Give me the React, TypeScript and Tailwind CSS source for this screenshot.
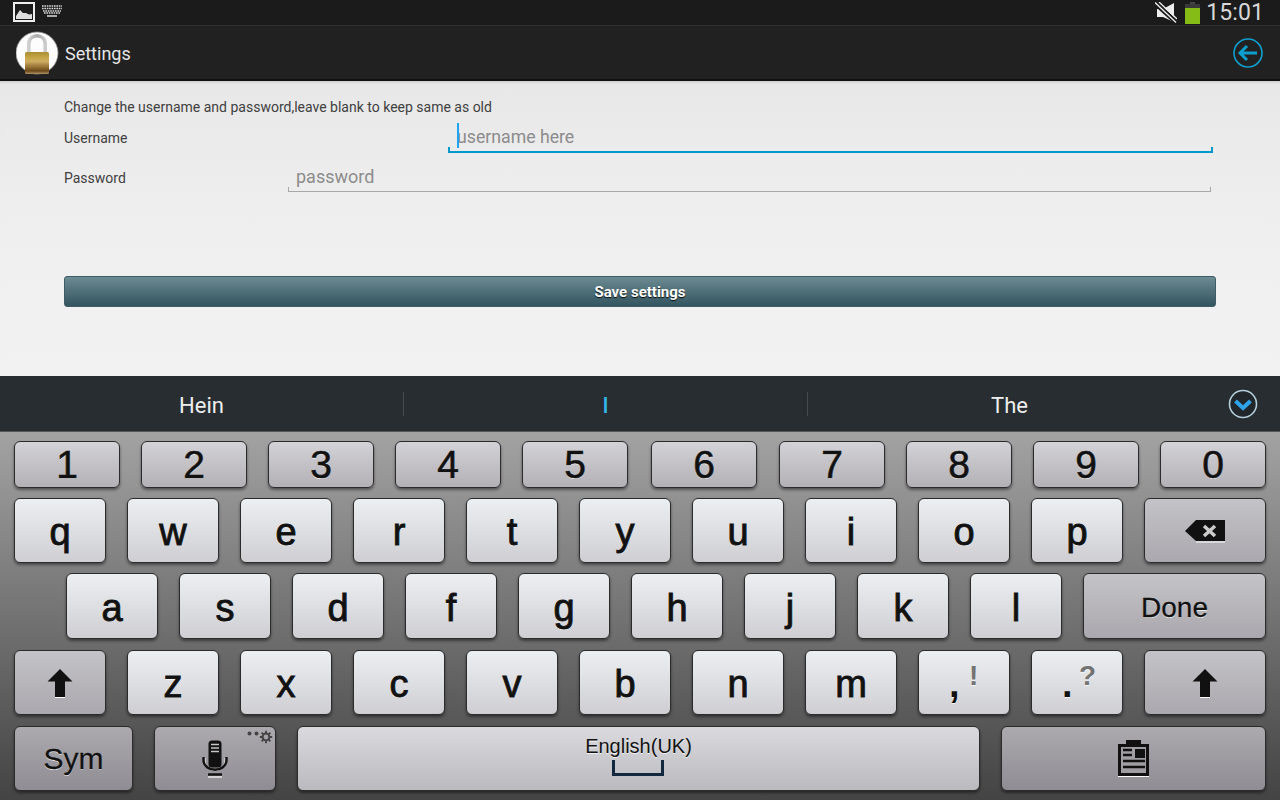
import React from "react";

const shadow = "[text-shadow:0_1px_0_rgba(255,255,255,0.75)]";
const letter = "pt-[4px] [-webkit-text-stroke:0.9px_#111]";
const digit = "pt-[2px] [-webkit-text-stroke:0.6px_#111]";

function Key({ w, variant = "light", label, className = "", children }: { w: string; variant?: "light" | "top" | "dark" | "darker" | "space"; label?: string; className?: string; children?: React.ReactNode }) {
  const bg = {
    top: "bg-gradient-to-b from-[#d3d2d6] to-[#b3b1b6]",
    dark: "bg-gradient-to-b from-[#c4c3c7] to-[#aaa8ae]",
    darker: "bg-gradient-to-b from-[#acaaaf] to-[#8f8d93]",
    space: "bg-gradient-to-b from-[#dadade] to-[#bbbbbf]",
    light: "bg-gradient-to-b from-[#eceff1] to-[#cfcfd3]",
  }[variant];
  return (
    <div
      className={`${w} ${bg} h-full shrink-0 rounded-[6px] border border-[#2b2b2b] shadow-[0_2px_3px_rgba(0,0,0,0.45)] flex items-center justify-center text-[#111] ${shadow} ${className}`}
    >
      {label}
      {children}
    </div>
  );
}

function Up() {
  return (
    <svg width="26" height="30" viewBox="0 0 26 30">
      <path d="M13 1 L25.5 13.5 L18 13.5 L18 29 L8 29 L8 13.5 L0.5 13.5 Z" fill="#111" />
      <path d="M8 29.5 H18" stroke="#fff" strokeWidth="1" />
    </svg>
  );
}

function Lock() {
  return (
    <svg width="44" height="44" viewBox="0 0 44 44">
      <defs>
        <linearGradient id="lockbody" x1="0" y1="0" x2="0" y2="1">
          <stop offset="0" stopColor="#a98e35" />
          <stop offset="0.25" stopColor="#c4a445" />
          <stop offset="0.42" stopColor="#cfae62" />
          <stop offset="0.6" stopColor="#a88344" />
          <stop offset="0.72" stopColor="#8d6a2e" />
          <stop offset="0.86" stopColor="#6b481a" />
          <stop offset="1" stopColor="#b09268" />
        </linearGradient>
        <linearGradient id="shack" x1="0" y1="0" x2="1" y2="0">
          <stop offset="0" stopColor="#cfcfcf" />
          <stop offset="0.5" stopColor="#a8a8a8" />
          <stop offset="1" stopColor="#cccccc" />
        </linearGradient>
      </defs>
      <circle cx="21" cy="22" r="21" fill="#fdfdfd" stroke="#9a9a9a" strokeWidth="0.75" />
      <path d="M12.75 22 V13 C12.75 2 29.25 2 29.25 13 V22" fill="none" stroke="url(#shack)" strokeWidth="3.5" />
      <rect x="9" y="21" width="24" height="22" rx="1.5" fill="url(#lockbody)" />
    </svg>
  );
}

function Row({ h, className = "", children }: { h: string; className?: string; children: React.ReactNode }) {
  return <div className={`flex ${h} ${className}`}>{children}</div>;
}

const row2 = ["q", "w", "e", "r", "t", "y", "u", "i", "o", "p"];
const row3 = ["a", "s", "d", "f", "g", "h", "j", "k", "l"];
const row4 = ["z", "x", "c", "v", "b", "n", "m"];

export default function App() {
  return (
    <div className="w-[1280px] h-[800px] overflow-hidden flex flex-col font-['Roboto',sans-serif] bg-black">
      {/* status bar */}
      <div className="h-[26px] shrink-0 bg-[#1b1b1b] border-b border-[#303030] flex items-center pl-[13px] pr-[16px]">
        <svg width="22" height="20" viewBox="0 0 22 20" className="mb-[1px]">
          <rect x="1" y="1" width="20" height="18" fill="#1b1b1b" stroke="#eee" strokeWidth="2" />
          <path d="M3 17 V14 L7 8 L10 11 L13 11 L16 12.5 L19 12 V17 Z" fill="#ddd" />
        </svg>
        <svg width="20" height="12" viewBox="0 0 20 12" className="ml-[7px] mb-[3px]">
          <path d="M0 1 H20 M0 3.5 H20 M1 6 H19 M2 8 H18" stroke="#ddd" strokeWidth="1.6" strokeDasharray="1.6 0.8" />
          <path d="M5 11 H15" stroke="#ddd" strokeWidth="1.5" />
        </svg>
        <div className="ml-auto flex items-center">
          <svg width="22" height="22" viewBox="0 0 22 22">
            <path d="M2 7 H8 L19 1 V20 L8 15 H2 Z" fill="#eee" />
            <path d="M0 1 L21 20" stroke="#1b1b1b" strokeWidth="5" />
            <path d="M0 0.5 L21 20.5 M4 0 L22 17" stroke="#eee" strokeWidth="1.3" />
          </svg>
          <div className="ml-[8px] w-[15px] h-[22px] mt-[1px] flex flex-col items-center">
            <div className="w-[5px] h-[2px] bg-[#444]" />
            <div className="w-[15px] h-[4px] bg-[#3a3a3a]" />
            <div className="w-[15px] h-[16px] bg-[#86bc16]" />
          </div>
          <span className="ml-[6px] text-[23px] leading-none text-[#d8d8d8] tracking-[0.1px]">15:01</span>
        </div>
      </div>

      {/* action bar */}
      <div className="h-[55px] shrink-0 bg-[#212121] border-b-[2px] border-[#111] flex items-center pl-[16px] pr-[17px]">
        <Lock />
        <span className="ml-[5px] mt-[1px] text-[18px] text-[#e6e6e6]">Settings</span>
        <svg className="ml-auto" width="30" height="30" viewBox="0 0 30 30">
          <circle cx="15" cy="15" r="14" fill="none" stroke="#0f9fcf" strokeWidth="1.6" />
          <path d="M14 8 L7 15 L14 22 M7.5 15 H24" fill="none" stroke="#0f9fcf" strokeWidth="3" />
        </svg>
      </div>

      {/* content */}
      <div className="h-[295px] shrink-0 bg-gradient-to-b from-[#e8e8e8] via-[#efefef] to-[#f2f2f2] pl-[64px] pr-[64px] text-[#404040] text-[14px] shadow-[inset_0_3px_3px_-2px_rgba(0,0,0,0.15)]">
        <div className="pt-[18px] h-[36px] leading-[17px]">Change the username and password,leave blank to keep same as old</div>
        <div className="flex h-[36px]">
          <div className="w-[384px] pt-[13px] leading-[17px]">Username</div>
          <div className="relative flex-1 mr-[3px] border-b-2 border-[#0099cc] h-[36px] pl-[9px] pt-[8px] text-[17.7px] leading-[24px] text-[#8c8c8c]">
            username here
            <div className="absolute left-[9px] top-[6px] w-[2px] h-[25px] bg-[#1ea4f0]" />
            <div className="absolute left-0 bottom-0 w-[2px] h-[4px] bg-[#0099cc]" />
            <div className="absolute right-0 bottom-0 w-[2px] h-[4px] bg-[#0099cc]" />
          </div>
        </div>
        <div className="flex h-[36px] mt-[3px]">
          <div className="w-[224px] pt-[14px] leading-[17px]">Password</div>
          <div className="relative flex-1 mr-[5px] border-b border-[#a8a8a8] h-[36px] pl-[8px] pt-[9px] text-[18px] leading-[24px] text-[#8c8c8c]">
            password
            <div className="absolute left-0 bottom-0 w-px h-[4px] bg-[#a8a8a8]" />
            <div className="absolute right-0 bottom-0 w-px h-[4px] bg-[#a8a8a8]" />
          </div>
        </div>
        <div className="mt-[84px] h-[31px] pt-[1px] rounded-[3px] border border-[#3f5c64] bg-gradient-to-b from-[#6c8b93] to-[#33555f] flex items-center justify-center text-white text-[15px] font-bold [text-shadow:0_1px_1px_rgba(0,0,0,0.9)]">
          Save settings
        </div>
      </div>

      {/* candidates */}
      <div className="h-[56px] shrink-0 bg-[#272d30] flex items-center relative text-[22px] text-[#eee] border-b border-[#555]">
        <div className="w-[403px] text-center pt-[4px]">Hein</div>
        <div className="w-px h-[24px] bg-[#454b4e]" />
        <div className="w-[403px] text-center text-[#35b5ee] font-medium pt-[4px]">l</div>
        <div className="w-px h-[24px] bg-[#454b4e]" />
        <div className="w-[403px] text-center pt-[4px]">The</div>
        <svg className="absolute right-[22px] top-[13px]" width="30" height="30" viewBox="0 0 30 30">
          <circle cx="15" cy="15" r="13.5" fill="#20262a" stroke="#b5cfdc" strokeWidth="1.6" />
          <path d="M7.5 12 L15 19 L22.5 12" fill="none" stroke="#2ea3ea" strokeWidth="4" />
        </svg>
      </div>

      {/* keyboard */}
      <div className="flex-1 bg-gradient-to-b from-[#a3a3a3] via-[#737373] to-[#444444] pt-[9px] pl-[14px] flex flex-col font-['Liberation_Sans',sans-serif]">
        <Row h="h-[47px]" className="text-[39px] gap-[21px]">
          {["1", "2", "3", "4", "5"].map((k) => (
            <Key key={k} w="w-[106px]" variant="top" label={k} className={digit} />
          ))}
          <Key w="w-[106px]" variant="top" label="6" className={`ml-[2px] ${digit}`} />
          <Key w="w-[106px]" variant="top" label="7" className={`ml-px ${digit}`} />
          {["8", "9", "0"].map((k) => (
            <Key key={k} w="w-[106px]" variant="top" label={k} className={digit} />
          ))}
        </Row>
        <Row h="h-[65px]" className="mt-[10px] text-[38px] gap-[21px]">
          {row2.map((k) => (
            <Key key={k} w="w-[92px]" label={k} className={letter} />
          ))}
          <Key w="w-[122px]" variant="dark">
            <svg width="41" height="24" viewBox="0 0 41 24">
              <path d="M11 1 H40 V22 H11 L0 12 Z" fill="#111" />
              <path d="M11 23 H40" stroke="#fff" strokeWidth="1" />
              <path d="M19 7 L30 17 M30 7 L19 17" stroke="#ccc" strokeWidth="3.5" />
            </svg>
          </Key>
        </Row>
        <Row h="h-[66px]" className="mt-[10px] ml-[52px] text-[38px] gap-[21px]">
          {row3.map((k) => (
            <Key key={k} w="w-[92px]" label={k} className={letter} />
          ))}
          <Key w="w-[183px]" variant="dark" label="Done" className="text-[28px] pt-[4px] [-webkit-text-stroke:0.3px_#111]" />
        </Row>
        <Row h="h-[65px]" className="mt-[11px] text-[38px] gap-[21px]">
          <Key w="w-[92px]" variant="dark"><Up /></Key>
          {row4.map((k) => (
            <Key key={k} w="w-[92px]" label={k} className={letter} />
          ))}
          <Key w="w-[92px]" className="relative">
            <span className="absolute left-[30px] top-[5px] font-bold">,</span>
            <span className="absolute left-[50px] top-[4px] text-[28px] font-bold text-[#737373]">!</span>
          </Key>
          <Key w="w-[92px]" className="relative">
            <span className="absolute left-[30px] top-[5px] font-bold">.</span>
            <span className="absolute left-[47px] top-[4px] text-[28px] font-bold text-[#737373]">?</span>
          </Key>
          <Key w="w-[122px]" variant="dark"><Up /></Key>
        </Row>
        <Row h="h-[65px]" className="mt-[11px] gap-[21px]">
          <Key w="w-[119px]" variant="darker" label="Sym" className="text-[30px] [-webkit-text-stroke:0.3px_#111]" />
          <Key w="w-[122px]" variant="darker" className="relative">
            <svg width="26" height="38" viewBox="0 0 26 38" className="mt-[1px]">
              <rect x="6.5" y="0.5" width="13" height="27" rx="3.5" fill="#111" />
              <path d="M9 4.5 H17 M9 8 H17 M9 11.5 H17" stroke="#c5c5c5" strokeWidth="1.6" />
              <path d="M3 18 V20 C3 34 23 34 23 20 V18" fill="none" stroke="#e8e8e8" strokeWidth="1" />
              <path d="M1.5 17 V20 C1.5 33 24.5 33 24.5 20 V17" fill="none" stroke="#111" strokeWidth="2.4" />
              <path d="M6 34.5 H20" stroke="#111" strokeWidth="2.5" />
              <path d="M6 37 H20" stroke="#fff" strokeWidth="1.2" />
            </svg>
            <svg className="absolute right-[2px] top-[2px]" width="26" height="16" viewBox="0 0 26 16">
              <circle cx="2.5" cy="4.5" r="2" fill="#444" />
              <circle cx="9.5" cy="4.5" r="2" fill="#444" />
              <path d="M19 1.8 V14.2 M12.8 8 H25.2 M14.6 3.6 L23.4 12.4 M23.4 3.6 L14.6 12.4" stroke="#444" strokeWidth="1.8" />
              <circle cx="19" cy="8" r="3.4" fill="#a5a3a8" stroke="#444" strokeWidth="2" />
            </svg>
          </Key>
          <Key w="w-[683px]" variant="space" className="relative">
            <span className="absolute top-[4px] left-0 right-0 text-center text-[20px]">English(UK)</span>
            <svg className="absolute left-[314px] top-[33px]" width="52" height="17" viewBox="0 0 52 17">
              <path d="M1.5 0 V14.5 H50.5 V0" fill="none" stroke="#12283f" strokeWidth="3" />
            </svg>
          </Key>
          <Key w="w-[265px]" variant="darker">
            <svg width="32" height="37" viewBox="0 0 32 37">
              <path d="M8 0 H23 V4 H31 V36 H0 V4 H8 Z" fill="#111" />
              <rect x="3" y="7" width="25" height="26" fill="#a09ea3" />
              <rect x="17" y="9" width="10" height="9" fill="#111" />
              <path d="M5 10 H14 M5 15 H14 M5 21 H27 M5 27 H27" stroke="#111" strokeWidth="2.4" />
              <path d="M0 36.5 H31" stroke="#fff" strokeWidth="1" />
            </svg>
          </Key>
        </Row>
      </div>
    </div>
  );
}
